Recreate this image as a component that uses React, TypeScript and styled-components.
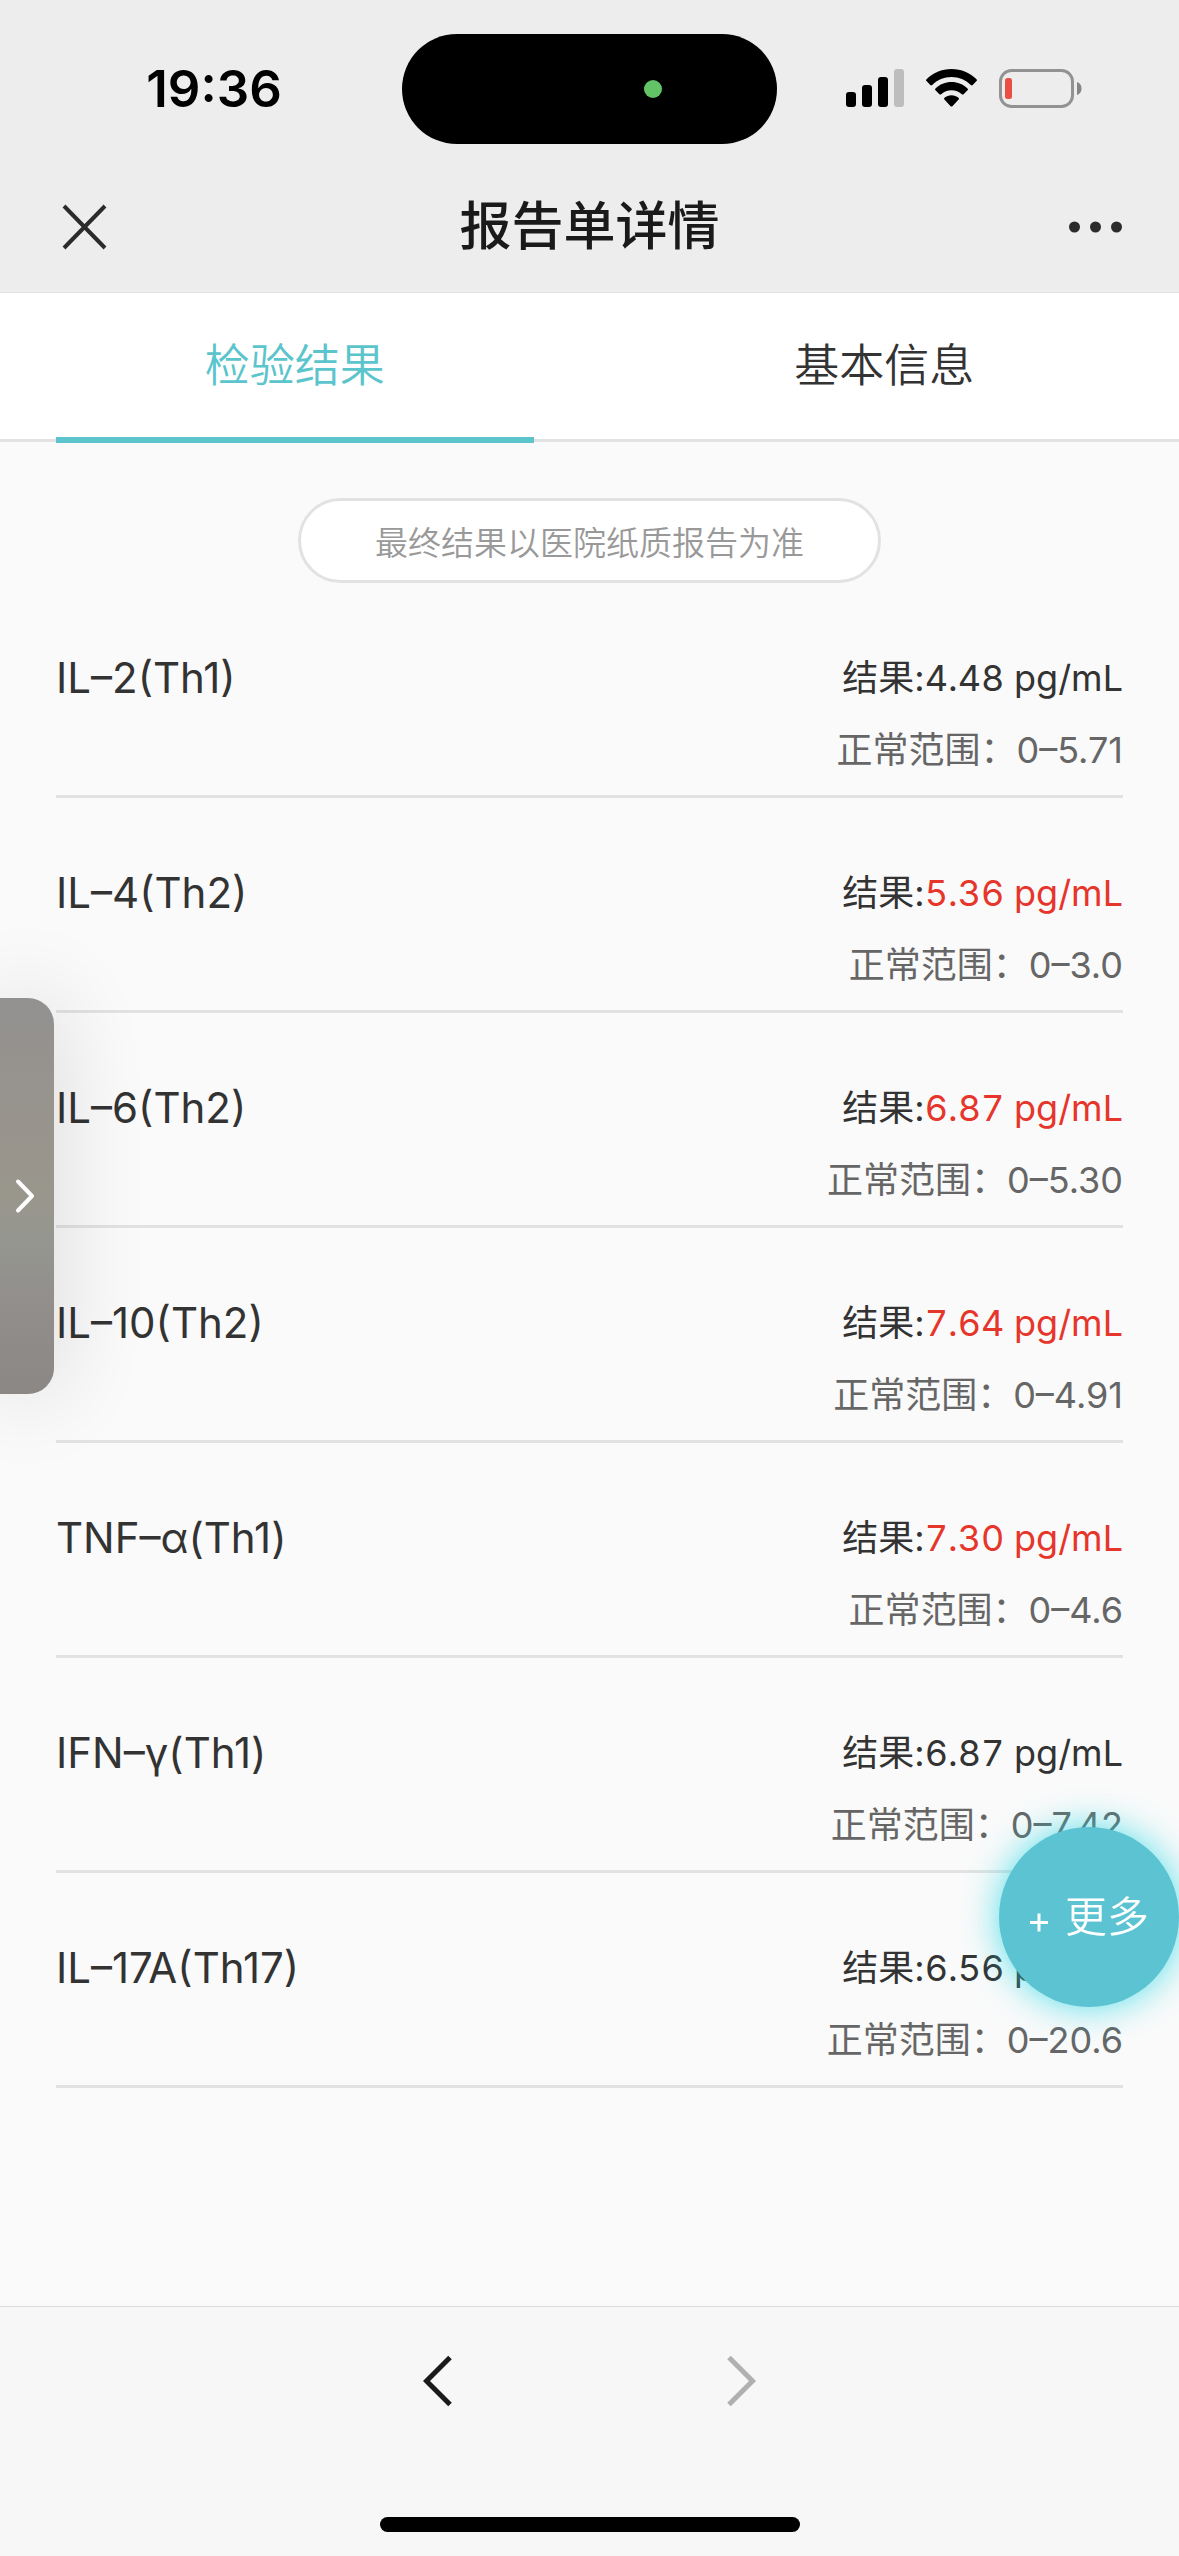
import React, { useState } from "react";
import styled, { createGlobalStyle } from "styled-components";

const GlobalStyle = createGlobalStyle`
  * { box-sizing: border-box; }
  body {
    margin: 0;
    background: #fafafa;
    color: #333;
    font-family: Inter, "Noto Sans CJK SC", sans-serif;
    font-weight: 350;
  }
  button {
    margin: 0;
    padding: 0;
    border: 0;
    background: none;
    color: inherit;
    font: inherit;
    cursor: pointer;
  }
  svg { display: block; }
`;

const Page = styled.div`
  display: flex;
  flex-direction: column;
  min-height: 100vh;
`;

const Header = styled.header`
  background: #ededed;
  border-bottom: 1px solid #e2e2e2;
`;

const StatusBar = styled.div`
  display: grid;
  grid-template-columns: 1fr 375px 1fr;
  align-items: center;
  height: 160px;
  padding-top: 18px;
`;

const Clock = styled.time`
  padding-left: 26px;
  color: #000;
  font-size: 51px;
  line-height: 60px;
  font-weight: 600;
  text-align: center;
`;

const Island = styled.div`
  display: flex;
  align-items: center;
  justify-content: flex-end;
  height: 110px;
  padding-right: 115px;
  border-radius: 55px;
  background: #000;
`;

const CameraDot = styled.span`
  width: 18px;
  height: 18px;
  border-radius: 50%;
  background: #62c466;
`;

const StatusIcons = styled.div`
  display: flex;
  align-items: center;
  justify-content: flex-end;
  gap: 22px;
  height: 40px;
  padding: 0 97px 2px 0;
`;

const NavBar = styled.div`
  display: grid;
  grid-template-columns: 1fr auto 1fr;
  align-items: center;
  height: 132px;
  padding: 2px 56px 0;
`;

const NavButton = styled.button<{ $end?: boolean }>`
  justify-self: ${(p) => (p.$end ? "end" : "start")};
`;

const Title = styled.h1`
  margin: 0;
  color: #1a1a1a;
  font-size: 52px;
  line-height: 72px;
  font-weight: 500;
`;

const Tabs = styled.div`
  display: flex;
  height: 149px;
  border-bottom: 3px solid #e2e2e2;
  background: #fff;
`;

const Tab = styled.button<{ $active: boolean }>`
  position: relative;
  flex: 1;
  color: ${(p) => (p.$active ? "#5bc4cc" : "#333")};
  font-size: 45px;
  line-height: 60px;

  &::after {
    content: "";
    display: ${(p) => (p.$active ? "block" : "none")};
    position: absolute;
    right: 56px;
    bottom: -4px;
    left: 56px;
    height: 6px;
    background: #5bc4cc;
  }
`;

const Content = styled.main`
  display: flex;
  flex: 1;
  flex-direction: column;
  align-items: center;
  padding: 56px 56px 0;
`;

const Notice = styled.p`
  margin: 0;
  padding: 18px 74px 13px;
  border: 3px solid #e2e2e2;
  border-radius: 43px;
  background: #fff;
  color: #999;
  font-size: 33px;
  line-height: 48px;
`;

const List = styled.ul`
  width: 100%;
  margin: 0;
  padding: 0;
  list-style: none;
  font-weight: 400;
`;

const Row = styled.li`
  display: flex;
  justify-content: space-between;
  padding: 59px 0 9px;
  border-bottom: 3px solid #e2e2e2;
  line-height: 72px;
`;

const Name = styled.span`
  font-size: 42px;
`;

const Figures = styled.div`
  font-size: 36px;
  text-align: right;
`;

const Result = styled.div``;

const Value = styled.span<{ $abnormal?: boolean }>`
  color: ${(p) => (p.$abnormal ? "#e6352b" : "inherit")};
  font-variant-numeric: tabular-nums;
`;

const Range = styled.div`
  color: #666;
`;

const SideHandle = styled.button`
  position: fixed;
  top: 998px;
  left: 0;
  display: flex;
  align-items: center;
  width: 54px;
  height: 396px;
  padding-left: 14px;
  border-radius: 0 26px 26px 0;
  background: linear-gradient(#929190, #97938e 20%, #99968c 50%, #959690 62%, #928f8c 75%, #8b8785);
  box-shadow: 0 0 90px rgba(0, 0, 0, 0.16);
`;

const MoreButton = styled.button`
  position: fixed;
  right: 0;
  bottom: 549px;
  display: flex;
  align-items: center;
  justify-content: center;
  gap: 14px;
  width: 180px;
  height: 180px;
  padding-right: 2px;
  border-radius: 50%;
  background: #5bc3d1;
  box-shadow: 0 0 36px rgba(30, 215, 230, 0.75);
  color: #fff;
  font-size: 42px;
  line-height: 60px;
`;

const Footer = styled.footer`
  display: flex;
  flex-direction: column;
  align-items: center;
  justify-content: space-between;
  height: 250px;
  padding: 46px 0 24px;
  border-top: 1px solid #dcdcdc;
  background: #f7f7f7;
`;

const Pager = styled.nav`
  display: flex;
  gap: 244px;
`;

const PagerButton = styled.button`
  padding: 0 15px;
  &:disabled { cursor: default; }
`;

const HomeIndicator = styled.div`
  width: 420px;
  height: 15px;
  border-radius: 8px;
  background: #000;
`;

const results = [
  { name: "IL–2(Th1)", value: "4.48 pg/mL", range: "0–5.71" },
  { name: "IL–4(Th2)", value: "5.36 pg/mL", range: "0–3.0", abnormal: true },
  { name: "IL–6(Th2)", value: "6.87 pg/mL", range: "0–5.30", abnormal: true },
  { name: "IL–10(Th2)", value: "7.64 pg/mL", range: "0–4.91", abnormal: true },
  { name: "TNF–α(Th1)", value: "7.30 pg/mL", range: "0–4.6", abnormal: true },
  { name: "IFN–γ(Th1)", value: "6.87 pg/mL", range: "0–7.42" },
  { name: "IL–17A(Th17)", value: "6.56 pg/mL", range: "0–20.6" },
];

const tabs = ["检验结果", "基本信息"];

const SignalIcon = () => (
  <svg width="58" height="38" viewBox="0 0 58 38" aria-hidden="true">
    <rect x="0" y="23" width="10" height="15" rx="3" />
    <rect x="16" y="16" width="10" height="22" rx="3" />
    <rect x="32" y="8" width="10" height="30" rx="3" />
    <rect x="48" y="0" width="10" height="38" rx="3" fill="#bdbdbd" />
  </svg>
);

const WifiIcon = () => (
  <svg width="51" height="38" viewBox="0 0 51 38" aria-hidden="true">
    <path d="M25.500 0C35.300 0 44.200 3.900 50.500 10.200c.6.600.6 1.300 0 1.900l-3.800 3.900c-.5.500-1.300.5-1.900 0C39.700 11.100 32.900 8.100 25.500 8.100S11.300 11.100 6.200 16c-.6.500-1.400.5-1.900 0L.5 12.100c-.6-.6-.6-1.300 0-1.900C6.800 3.900 15.700 0 25.500 0Z" />
    <path d="M25.500 13c6.200 0 11.800 2.400 16 6.400.6.600.6 1.300 0 1.900l-3.900 3.900c-.5.500-1.200.5-1.800.1-2.800-2.600-6.400-4.100-10.300-4.100s-7.500 1.500-10.300 4.100c-.6.400-1.300.4-1.800-.1l-3.900-3.900c-.6-.6-.6-1.300 0-1.900 4.200-4 9.800-6.400 16-6.400Z" />
    <path d="M25.500 26.200c2.700 0 5.100 1 7 2.600.6.500.6 1.300.1 1.800l-6.200 6.600c-.5.500-1.300.5-1.800 0l-6.200-6.600c-.5-.5-.5-1.300.1-1.800 1.900-1.600 4.300-2.600 7-2.600Z" />
  </svg>
);

const BatteryIcon = () => (
  <svg width="83" height="39" viewBox="0 0 83 39" aria-hidden="true">
    <rect x="1.500" y="1.500" width="72" height="36" rx="11" fill="none" stroke="#929292" strokeWidth="3" />
    <rect x="6" y="9" width="7" height="21" rx="2.500" fill="#eb4e43" />
    <path d="M78 13c3 1 4.500 3.500 4.500 6.500S81 25 78 26Z" fill="#858585" />
  </svg>
);

const CloseIcon = () => (
  <svg width="58" height="58" viewBox="0 0 58 58" aria-hidden="true">
    <path d="M8 8 49 50M49 8 8 50" fill="none" stroke="#2b2b2b" strokeWidth="4" />
  </svg>
);

const DotsIcon = () => (
  <svg width="54" height="12" viewBox="0 0 54 12" fill="#2b2b2b" aria-hidden="true">
    <circle cx="5.500" cy="6" r="5.500" />
    <circle cx="26.500" cy="6" r="5.500" />
    <circle cx="47.500" cy="6" r="5.500" />
  </svg>
);

const PagerIcon = ({ forward }: { forward?: boolean }) => (
  <svg width="30" height="56" viewBox="0 0 30 56" fill="none" strokeWidth="5" aria-hidden="true">
    {forward ? (
      <path d="M2 4.500 25.500 28 2 51.500" stroke="#b0b0b0" />
    ) : (
      <path d="M27 4.500 3.500 28 27 51.500" stroke="#1a1a1a" />
    )}
  </svg>
);

const HandleIcon = () => (
  <svg width="22" height="38" viewBox="0 0 22 38" aria-hidden="true">
    <path d="M4 4.500 18 19 4 33.500" fill="none" stroke="#fff" strokeWidth="4" strokeLinecap="round" strokeLinejoin="round" />
  </svg>
);

const PlusIcon = () => (
  <svg width="24" height="30" viewBox="0 0 24 30" aria-hidden="true">
    <path d="M3 20.500H21M12 11.500V29.500" fill="none" stroke="#fff" strokeWidth="3" />
  </svg>
);

export default function App() {
  const [active, setActive] = useState(0);

  return (
    <>
      <GlobalStyle />
      <Page>
        <Header>
          <StatusBar>
            <Clock>19:36</Clock>
            <Island>
              <CameraDot />
            </Island>
            <StatusIcons>
              <SignalIcon />
              <WifiIcon />
              <BatteryIcon />
            </StatusIcons>
          </StatusBar>
          <NavBar>
            <NavButton type="button" aria-label="关闭">
              <CloseIcon />
            </NavButton>
            <Title>报告单详情</Title>
            <NavButton type="button" aria-label="菜单" $end>
              <DotsIcon />
            </NavButton>
          </NavBar>
        </Header>
        <Tabs role="tablist">
          {tabs.map((label, i) => (
            <Tab
              key={label}
              type="button"
              role="tab"
              aria-selected={active === i}
              $active={active === i}
              onClick={() => setActive(i)}
            >
              {label}
            </Tab>
          ))}
        </Tabs>
        <Content>
          <Notice>最终结果以医院纸质报告为准</Notice>
          <List>
            {results.map((item) => (
              <Row key={item.name}>
                <Name>{item.name}</Name>
                <Figures>
                  <Result>
                    结果:<Value $abnormal={item.abnormal}>{item.value}</Value>
                  </Result>
                  <Range>正常范围：{item.range}</Range>
                </Figures>
              </Row>
            ))}
          </List>
        </Content>
        <Footer>
          <Pager>
            <PagerButton type="button" aria-label="后退">
              <PagerIcon />
            </PagerButton>
            <PagerButton type="button" aria-label="前进" disabled>
              <PagerIcon forward />
            </PagerButton>
          </Pager>
          <HomeIndicator />
        </Footer>
      </Page>
      <SideHandle type="button" aria-label="展开">
        <HandleIcon />
      </SideHandle>
      <MoreButton type="button">
        <PlusIcon />
        更多
      </MoreButton>
    </>
  );
}
